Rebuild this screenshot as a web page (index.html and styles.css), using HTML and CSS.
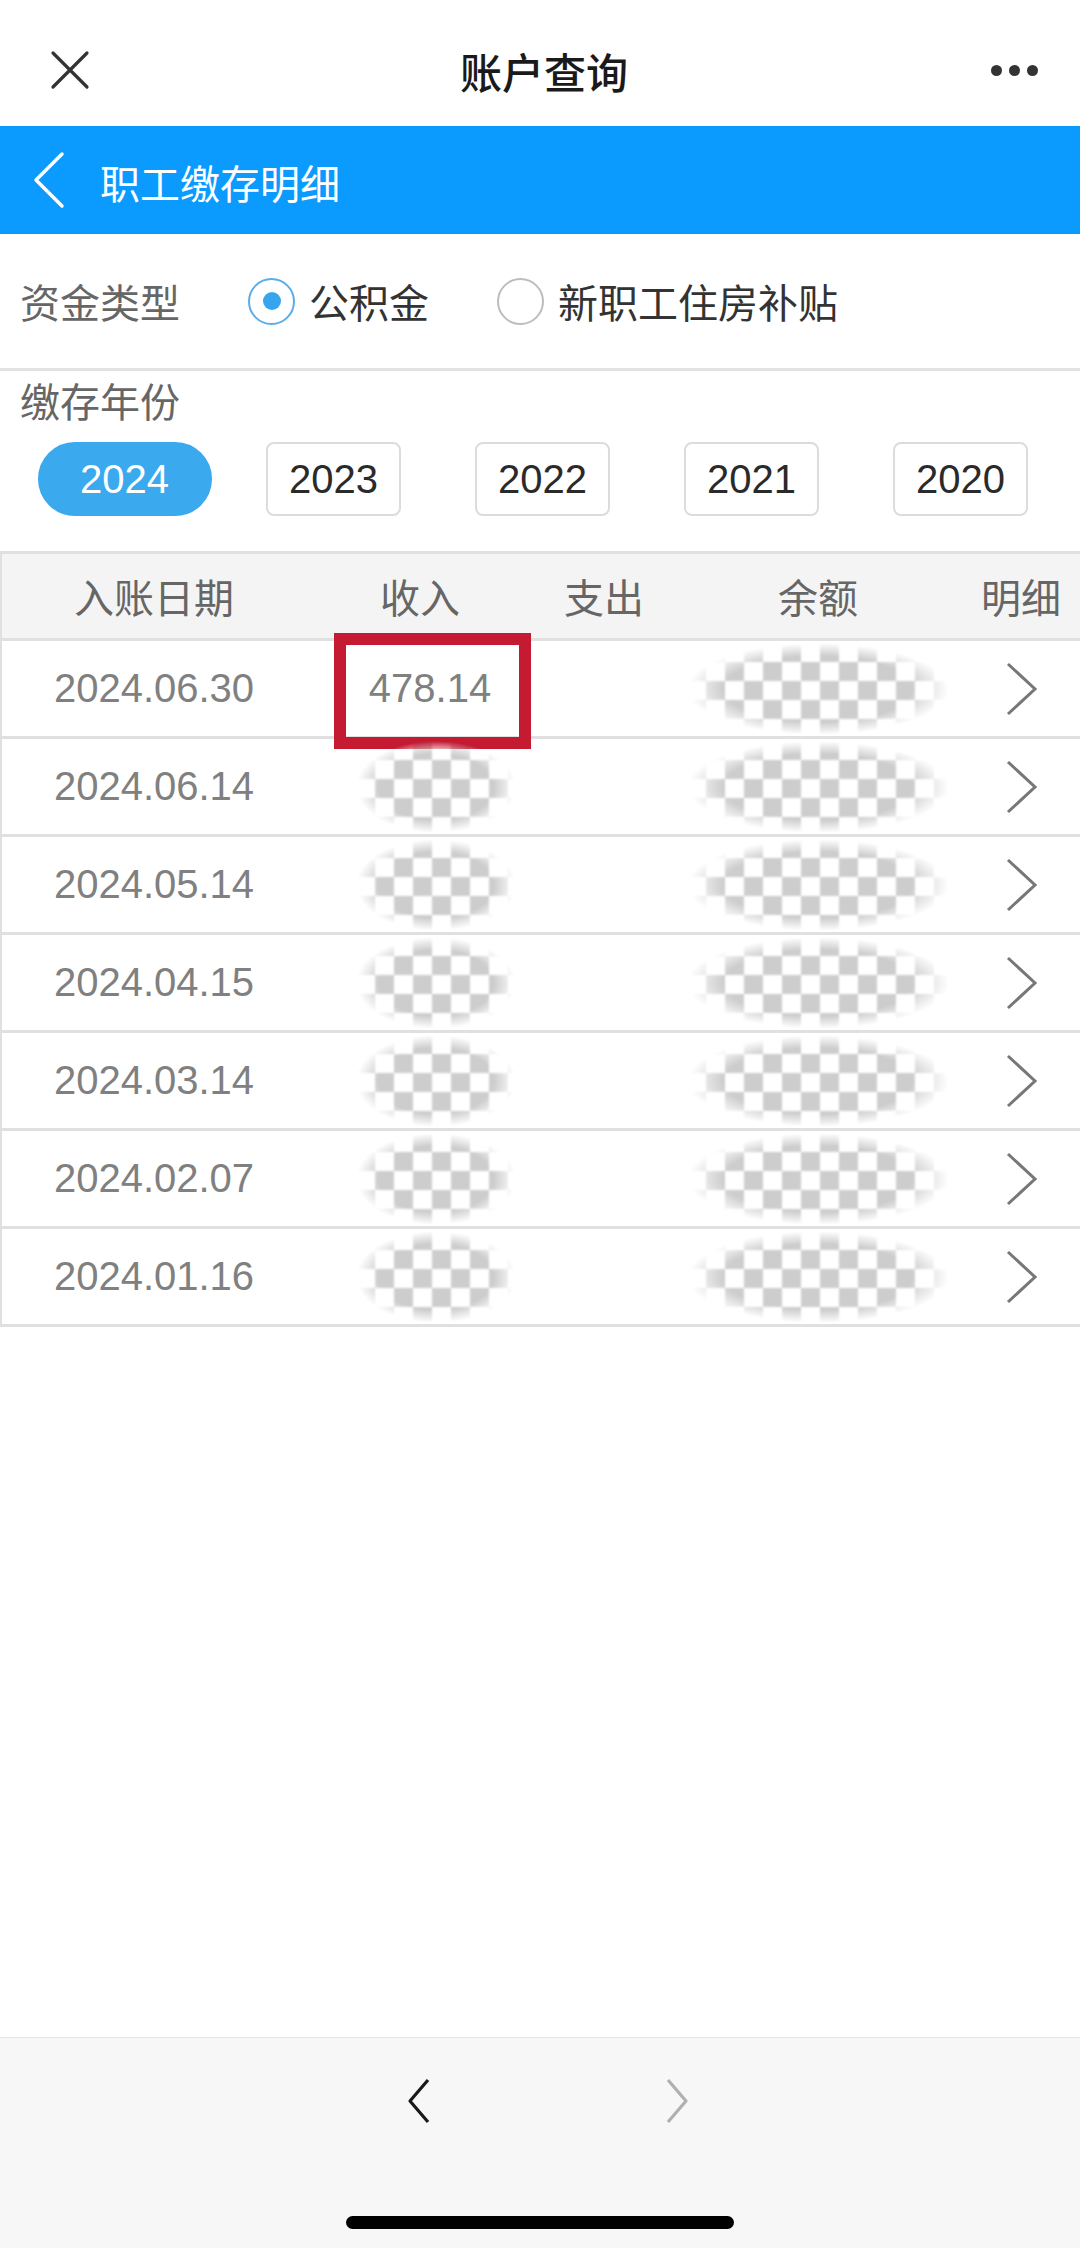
FILE: index.html
```html
<!DOCTYPE html>
<html>
<head>
	<meta charset="utf-8">
	<title>账户查询</title>
	<link rel="stylesheet" href="styles.css">
</head>
<body>
<div class="page">
	<div class="topbar">
		<span class="top-close">
			<svg width="40" height="40" viewBox="0 0 40 40"><path d="M3 3 L37 37 M37 3 L3 37" stroke="#333" stroke-width="3.2" stroke-linecap="round" fill="none"/></svg>
		</span>
		<div class="top-title">账户查询</div>
		<span class="top-more"><i></i><i></i><i></i></span>
	</div>

	<div class="header">
		<svg class="header-back" width="34" height="58" viewBox="0 0 34 58"><path d="M30 3 L4 29 L30 55" stroke="#fff" stroke-width="3.5" stroke-linecap="round" stroke-linejoin="round" fill="none"/></svg>
		<span class="header-title">职工缴存明细</span>
	</div>

	<div class="main">
		<div class="fund-type">
			<span class="label">资金类型</span>
			<label class="radio checked"><span class="radio-dot"></span>公积金</label>
			<label class="radio"><span class="radio-dot"></span>新职工住房补贴</label>
		</div>

		<div class="years">
			<div class="label">缴存年份</div>
			<div class="year-list">
				<span class="year active">2024</span>
				<span class="year">2023</span>
				<span class="year">2022</span>
				<span class="year">2021</span>
				<span class="year">2020</span>
			</div>
		</div>

		<div class="detail-table">
			<div class="row head">
				<span>入账日期</span>
				<span>收入</span>
				<span>支出</span>
				<span>余额</span>
				<span>明细</span>
			</div>
			<div class="row">
				<span class="date">2024.06.30</span>
				<span class="income">478.14<b class="mark"></b></span>
				<span></span>
				<span><i class="mosaic wide"></i></span>
				<span class="more"><svg width="32" height="54" viewBox="0 0 32 54"><path d="M2 2 L29 27 L2 52" stroke="#777" stroke-width="3" fill="none"/></svg></span>
			</div>
			<div class="row">
				<span class="date">2024.06.14</span>
				<span><i class="mosaic"></i></span>
				<span></span>
				<span><i class="mosaic wide"></i></span>
				<span class="more"><svg width="32" height="54" viewBox="0 0 32 54"><path d="M2 2 L29 27 L2 52" stroke="#777" stroke-width="3" fill="none"/></svg></span>
			</div>
			<div class="row">
				<span class="date">2024.05.14</span>
				<span><i class="mosaic"></i></span>
				<span></span>
				<span><i class="mosaic wide"></i></span>
				<span class="more"><svg width="32" height="54" viewBox="0 0 32 54"><path d="M2 2 L29 27 L2 52" stroke="#777" stroke-width="3" fill="none"/></svg></span>
			</div>
			<div class="row">
				<span class="date">2024.04.15</span>
				<span><i class="mosaic"></i></span>
				<span></span>
				<span><i class="mosaic wide"></i></span>
				<span class="more"><svg width="32" height="54" viewBox="0 0 32 54"><path d="M2 2 L29 27 L2 52" stroke="#777" stroke-width="3" fill="none"/></svg></span>
			</div>
			<div class="row">
				<span class="date">2024.03.14</span>
				<span><i class="mosaic"></i></span>
				<span></span>
				<span><i class="mosaic wide"></i></span>
				<span class="more"><svg width="32" height="54" viewBox="0 0 32 54"><path d="M2 2 L29 27 L2 52" stroke="#777" stroke-width="3" fill="none"/></svg></span>
			</div>
			<div class="row">
				<span class="date">2024.02.07</span>
				<span><i class="mosaic"></i></span>
				<span></span>
				<span><i class="mosaic wide"></i></span>
				<span class="more"><svg width="32" height="54" viewBox="0 0 32 54"><path d="M2 2 L29 27 L2 52" stroke="#777" stroke-width="3" fill="none"/></svg></span>
			</div>
			<div class="row">
				<span class="date">2024.01.16</span>
				<span><i class="mosaic"></i></span>
				<span></span>
				<span><i class="mosaic wide"></i></span>
				<span class="more"><svg width="32" height="54" viewBox="0 0 32 54"><path d="M2 2 L29 27 L2 52" stroke="#777" stroke-width="3" fill="none"/></svg></span>
			</div>
		</div>
	</div>

	<div class="toolbar">
		<div class="toolbar-nav">
			<svg width="24" height="46" viewBox="0 0 24 46"><path d="M21 2 L3 23 L21 44" stroke="#1a1a1a" stroke-width="3.2" stroke-linejoin="round" fill="none"/></svg>
			<svg width="24" height="46" viewBox="0 0 24 46"><path d="M3 2 L21 23 L3 44" stroke="#b0b0b0" stroke-width="3.2" stroke-linejoin="round" fill="none"/></svg>
		</div>
		<div class="home-bar"></div>
	</div>
</div>
</body>
</html>
```

FILE: styles.css
```css
body {
	margin: 0;
	background: #fff;
	font-family: "Liberation Sans", "Noto Sans CJK SC", sans-serif;
}
.page {
	width: 1080px;
	height: 2248px;
	display: flex;
	flex-direction: column;
	overflow: hidden;
}

/* top bar */
.topbar {
	height: 126px;
	box-sizing: border-box;
	padding: 14px 42px 0 50px;
	display: grid;
	grid-template-columns: 1fr auto 1fr;
	align-items: center;
}
.top-close svg {
	display: block;
}
.top-title {
	font-family: "Noto Sans CJK SC", sans-serif;
	font-size: 42px;
	font-weight: 500;
	color: #1a1a1a;
}
.top-more {
	justify-self: end;
	display: flex;
	gap: 7px;
}
.top-more i {
	width: 11px;
	height: 11px;
	border-radius: 50%;
	background: #333;
}

/* blue header */
.header {
	height: 108px;
	background: #0b9bff;
	display: flex;
	align-items: center;
	padding-left: 32px;
	gap: 34px;
}
.header-back {
	display: block;
}
.header-title {
	font-family: "Noto Sans CJK SC", sans-serif;
	font-size: 40px;
	color: #fff;
	margin-top: 4px;
}

.main {
	flex: 1;
}
.label {
	font-family: "Noto Sans CJK SC", sans-serif;
	font-size: 40px;
	color: #666;
}

/* fund type */
.fund-type {
	height: 134px;
	border-bottom: 3px solid #e2e2e2;
	display: flex;
	align-items: center;
	padding-left: 20px;
}
.radio {
	display: flex;
	align-items: center;
	gap: 14px;
	margin-left: 68px;
	font-family: "Noto Sans CJK SC", sans-serif;
	font-size: 40px;
	color: #333;
}
.radio-dot {
	width: 47px;
	height: 47px;
	box-sizing: border-box;
	border: 2px solid #bdbdbd;
	border-radius: 50%;
	display: flex;
	align-items: center;
	justify-content: center;
}
.radio.checked .radio-dot {
	border-color: #5aaee6;
}
.radio.checked .radio-dot::after {
	content: "";
	width: 18px;
	height: 18px;
	border-radius: 50%;
	background: #36a5ee;
}

/* years */
.years {
	height: 180px;
}
.years .label {
	line-height: 58px;
	padding-left: 20px;
}
.year-list {
	margin-top: 13px;
	padding: 0 15px 0 20px;
	display: grid;
	grid-template-columns: repeat(5, 1fr);
	justify-items: center;
}
.year {
	width: 135px;
	height: 74px;
	box-sizing: border-box;
	border: 2px solid #dcdcdc;
	border-radius: 8px;
	font-size: 40px;
	line-height: 70px;
	text-align: center;
	color: #2a2a2a;
}
.year.active {
	width: 174px;
	border-radius: 37px;
	border-color: #3aa9ee;
	background: #3aa9ee;
	color: #fff;
}

/* table */
.detail-table {
	border-left: 2px solid #e0e0e0;
	border-bottom: 3px solid #e0e0e0;
}
.row {
	display: grid;
	grid-template-columns: 304px 228px 140px 288px 1fr;
	height: 98px;
	box-sizing: border-box;
	border-top: 3px solid #e0e0e0;
	align-items: center;
	text-align: center;
	font-size: 40px;
	color: #808080;
}
.row.head {
	height: 87px;
	background: #f4f4f4;
	font-family: "Noto Sans CJK SC", sans-serif;
	color: #666;
}
.income {
	position: relative;
	padding-left: 20px;
}
.mark {
	position: absolute;
	left: 28px;
	top: -33px;
	width: 197px;
	height: 116px;
	box-sizing: border-box;
	border: 12px solid #c41b33;
}
.mosaic {
	display: block;
	margin: 0 auto;
	width: 160px;
	height: 92px;
	position: relative;
	left: 16px;
	background: repeating-conic-gradient(#cdcdcd 0 25%, #fff 0 50%) 0 0 / 38px 38px;
	-webkit-mask-image: radial-gradient(closest-side, #000 72%, transparent 100%);
	mask-image: radial-gradient(closest-side, #000 72%, transparent 100%);
	filter: blur(1px);
}
.mosaic.wide {
	width: 262px;
	left: 0;
}
.more svg {
	display: block;
	margin-left: 44px;
}

/* bottom toolbar */
.toolbar {
	height: 211px;
	box-sizing: border-box;
	background: #f7f7f7;
	border-top: 1px solid #e4e4e4;
	padding-top: 40px;
	display: flex;
	flex-direction: column;
	align-items: center;
}
.toolbar-nav {
	display: flex;
	gap: 234px;
	margin-left: 16px;
}
.toolbar-nav svg {
	display: block;
}
.home-bar {
	margin-top: 92px;
	width: 388px;
	height: 13px;
	border-radius: 7px;
	background: #000;
}
```
